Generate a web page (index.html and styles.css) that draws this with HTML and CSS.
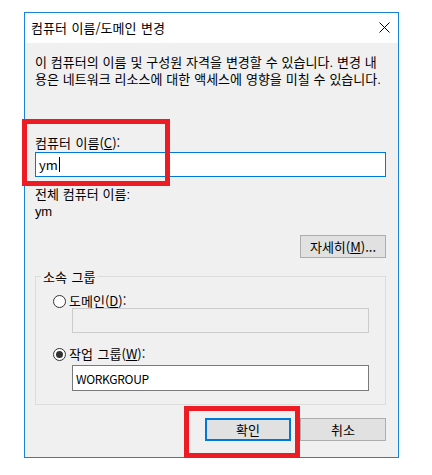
FILE: index.html
```html
<!DOCTYPE html>
<html lang="ko">
<head>
<meta charset="utf-8">
<title>컴퓨터 이름/도메인 변경</title>
<link rel="stylesheet" href="styles.css">
</head>
<body>
<div class="dialog">
  <div class="titlebar">
    <span class="title">컴퓨터 이름/도메인 변경</span>
    <span class="close">
      <svg width="11" height="11" viewBox="0 0 11 11"><path d="M0.5 0.5 L10.5 10.5 M10.5 0.5 L0.5 10.5" stroke="#000" stroke-width="1" fill="none"/></svg>
    </span>
  </div>
  <div class="content">
    <p class="desc">이 컴퓨터의 이름 및 구성원 자격을 변경할 수 있습니다. 변경 내<br>용은 네트워크 리소스에 대한 액세스에 영향을 미칠 수 있습니다.</p>
    <div class="label first">컴퓨터 이름(<u>C</u>):</div>
    <div class="edit focused">ym<span class="caret"></span></div>
    <div class="label full">전체 컴퓨터 이름:</div>
    <div class="label value">ym</div>
    <div class="row-end more">
      <button class="btn">자세히(<u>M</u>)...</button>
    </div>
    <fieldset class="group">
      <legend>소속 그룹</legend>
      <div class="radio-row first-radio"><span class="radio"></span>도메인(<u>D</u>):</div>
      <div class="edit sub disabled"></div>
      <div class="radio-row second-radio"><span class="radio checked"></span>작업 그룹(<u>W</u>):</div>
      <div class="edit sub plain">WORKGROUP</div>
    </fieldset>
    <div class="row-end actions">
      <button class="btn default">확인</button>
      <button class="btn">취소</button>
    </div>
  </div>
</div>
<div class="mark mark-name"></div>
<div class="mark mark-ok"></div>
</body>
</html>
```

FILE: styles.css
```css
html, body {
  margin: 0;
  padding: 0;
  background: #ffffff;
}
body {
  position: relative;
  width: 432px;
  height: 475px;
  font-family: "Noto Sans CJK KR", "Noto Sans", sans-serif;
  font-size: 13px;
  word-spacing: 1px;
  color: #000;
  overflow: hidden;
}
.dialog {
  margin: 12px 0 0 24px;
  width: 375px;
  height: 446px;
  box-sizing: border-box;
  border: 1px solid #1883d7;
  background: #f0f0f0;
  display: flex;
  flex-direction: column;
}
.titlebar {
  height: 30px;
  flex: none;
  background: #ffffff;
  display: flex;
  align-items: center;
  justify-content: space-between;
  padding-left: 6px;
}
.title {
  line-height: 17px;
  margin-top: -1px;
}
.close {
  width: 28px;
  height: 30px;
  display: flex;
  align-items: center;
  justify-content: center;
}
.close svg {
  display: block;
  margin-top: -2px;
}
.content {
  padding: 11px 12px 0 10px;
  display: flex;
  flex-direction: column;
}
.desc {
  margin: 0;
  line-height: 17px;
  white-space: nowrap;
  font-family: "Liberation Sans", "Noto Sans CJK KR", sans-serif;
  word-spacing: 0.3px;
}
.label {
  line-height: 17px;
}
.label.first {
  margin-top: 46px;
}
.label.full {
  margin-top: 9px;
  font-family: "Liberation Sans", "Noto Sans CJK KR", sans-serif;
  word-spacing: 0.3px;
}
.label.value {
  font-family: "Liberation Sans", "Noto Sans CJK KR", sans-serif;
  letter-spacing: -0.3px;
}
.edit {
  height: 25px;
  box-sizing: border-box;
  border: 1px solid #7a7a7a;
  background: #ffffff;
  padding: 0 3px;
  line-height: 23px;
  display: flex;
  align-items: center;
}
.edit.focused {
  margin-top: 1px;
  border-color: #0078d7;
}
.caret {
  display: inline-block;
  width: 1px;
  height: 15px;
  background: #000;
  margin-left: 1px;
}
.row-end {
  display: flex;
  justify-content: flex-end;
  gap: 9px;
}
.more {
  margin-top: 15px;
}
.btn {
  width: 86px;
  height: 23px;
  box-sizing: border-box;
  border: 1px solid #adadad;
  background: #e1e1e1;
  font-family: inherit;
  font-size: 13px;
  word-spacing: 1px;
  color: #000;
  padding: 0;
  line-height: 20px;
}
.btn.default {
  border: 2px solid #0078d7;
}
.group {
  margin: 10px 0 0 0;
  padding: 0 0 13px 0;
  border: 1px solid #dcdcdc;
  min-width: 0;
}
.group legend {
  margin-left: 5px;
  padding: 0 2px;
  line-height: 17px;
}
.radio-row {
  display: flex;
  align-items: center;
  height: 14px;
  line-height: 14px;
  margin-left: 17px;
}
.first-radio {
  margin-top: 9px;
}
.second-radio {
  margin-top: 14px;
}
.radio {
  width: 13px;
  height: 13px;
  box-sizing: border-box;
  border: 1px solid #333333;
  border-radius: 50%;
  background: #ffffff;
  margin-right: 3px;
  display: flex;
  align-items: center;
  justify-content: center;
}
.radio.checked::after {
  content: "";
  width: 7px;
  height: 7px;
  border-radius: 50%;
  background: #333333;
}
.edit.sub {
  margin: 0 16px 0 36px;
}
.edit.disabled {
  border-color: #cccccc;
  background: #f0f0f0;
}
.edit.plain {
  margin-top: 4px;
  height: 26px;
  font-size: 12px;
  letter-spacing: -0.3px;
}
.actions {
  margin-top: 13px;
}
.mark {
  position: absolute;
  box-sizing: border-box;
  border: 5px solid #ed1c24;
}
.mark-name {
  left: 22px;
  top: 119px;
  width: 148px;
  height: 67px;
}
.mark-ok {
  left: 184px;
  top: 406px;
  width: 116px;
  height: 52px;
}
```
